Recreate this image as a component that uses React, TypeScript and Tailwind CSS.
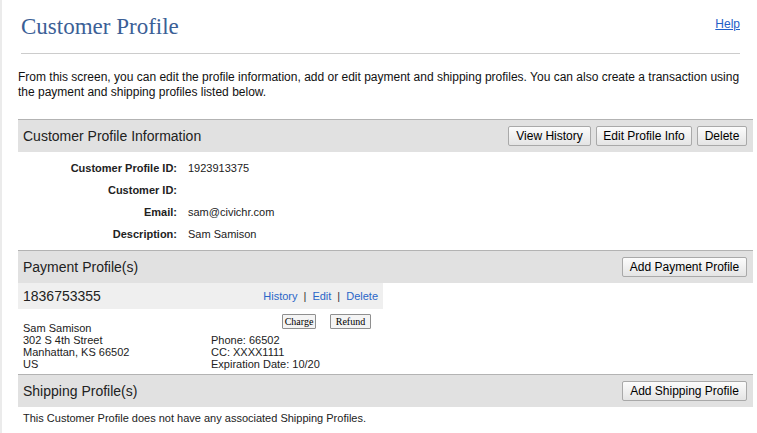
import React from "react";

const profileInfo: [string, string][] = [
  ["Customer Profile ID:", "1923913375"],
  ["Customer ID:", ""],
  ["Email:", "sam@civichr.com"],
  ["Description:", "Sam Samison"],
];

function GrayButton({ label, className }: { label: string; className: string }) {
  return (
    <button
      className={`h-[20px] rounded-[2px] border border-[#a9a9a9] bg-linear-to-b from-[#fcfcfc] to-[#e4e4e4] text-[12px] leading-none text-black ${className}`}
    >
      {label}
    </button>
  );
}

function SmallButton({ label, className }: { label: string; className: string }) {
  return (
    <button
      className={`h-[15px] rounded-[1px] border border-[#8f8f8f] bg-[#f4f4f4] font-['Liberation_Serif',serif] text-[10px] leading-none text-black ${className}`}
    >
      {label}
    </button>
  );
}

function SectionHeader({ title, children }: { title: string; children: React.ReactNode }) {
  return (
    <div className="flex h-[33px] items-center justify-between border-t border-[#b3b3b3] bg-[#e1e1e1] pl-[5px] pr-[6px]">
      <h3 className="text-[14px] text-[#222]">{title}</h3>
      <div className="flex gap-[5px]">{children}</div>
    </div>
  );
}

export default function App() {
  return (
    <div className="flex min-h-[433px] bg-white font-['Liberation_Sans',Arial,sans-serif] text-[#222]">
      {/* edge of the side panel */}
      <div className="w-[2px] shrink-0 bg-[#ebebeb]" />

      <div className="flex-1 pl-[16px] pr-[4px] pt-[14px]">
        <div className="ml-[3px] mr-[13px] flex items-start justify-between">
          <h1 className="font-['Liberation_Serif',Georgia,serif] text-[23px] leading-[26px] text-[#3b6096]">
            Customer Profile
          </h1>
          <a href="#" className="mt-[1px] text-[12px] text-[#1f5fc7] underline">
            Help
          </a>
        </div>
        <div className="ml-[3px] mr-[13px] mt-[13px] h-px bg-[#cccccc]" />

        <p className="mt-[16px] text-[12px] leading-[14.7px] text-[#111]">
          From this screen, you can edit the profile information, add or edit payment and shipping profiles. You can
          also create a transaction using the payment and shipping profiles listed below.
        </p>

        <div className="mt-[20px]">
          <SectionHeader title="Customer Profile Information">
            <GrayButton label="View History" className="w-[83px]" />
            <GrayButton label="Edit Profile Info" className="w-[96px]" />
            <GrayButton label="Delete" className="w-[50px]" />
          </SectionHeader>

          <div className="grid grid-cols-[159px_1fr] gap-x-[11px] py-[5px] text-[11px] leading-[22px]">
            {profileInfo.map(([label, value]) => (
              <React.Fragment key={label}>
                <div className="text-right font-bold">{label}</div>
                <div>{value}</div>
              </React.Fragment>
            ))}
          </div>

          <SectionHeader title="Payment Profile(s)">
            <GrayButton label="Add Payment Profile" className="w-[125px]" />
          </SectionHeader>

          <div className="w-[365px]">
            <div className="flex h-[26px] items-center justify-between bg-[#efefef] px-[5px]">
              <span className="text-[14px]">1836753355</span>
              <span className="text-[11px] text-[#333]">
                <a href="#" className="text-[#2a66c8]">History</a>
                <span className="mx-[6px]">|</span>
                <a href="#" className="text-[#2a66c8]">Edit</a>
                <span className="mx-[6px]">|</span>
                <a href="#" className="text-[#2a66c8]">Delete</a>
              </span>
            </div>

            <div className="flex text-[11px] leading-[12px]">
              <div className="w-[193px] pl-[5px] pt-[13px]">
                <div>Sam Samison</div>
                <div>302 S 4th Street</div>
                <div>Manhattan, KS 66502</div>
                <div>US</div>
              </div>
              <div className="flex-1 pb-[4px] pt-[5px]">
                <div className="flex justify-end gap-[14px] pr-[12px]">
                  <SmallButton label="Charge" className="w-[34px]" />
                  <SmallButton label="Refund" className="w-[41px]" />
                </div>
                <div className="mt-[5px]">
                  <div>Phone: 66502</div>
                  <div>CC: XXXX1111</div>
                  <div>Expiration Date: 10/20</div>
                </div>
              </div>
            </div>
          </div>

          <SectionHeader title="Shipping Profile(s)">
            <GrayButton label="Add Shipping Profile" className="w-[125px]" />
          </SectionHeader>

          <p className="pl-[5px] pt-[5px] text-[11px] leading-[12px]">
            This Customer Profile does not have any associated Shipping Profiles.
          </p>
        </div>
      </div>
    </div>
  );
}
